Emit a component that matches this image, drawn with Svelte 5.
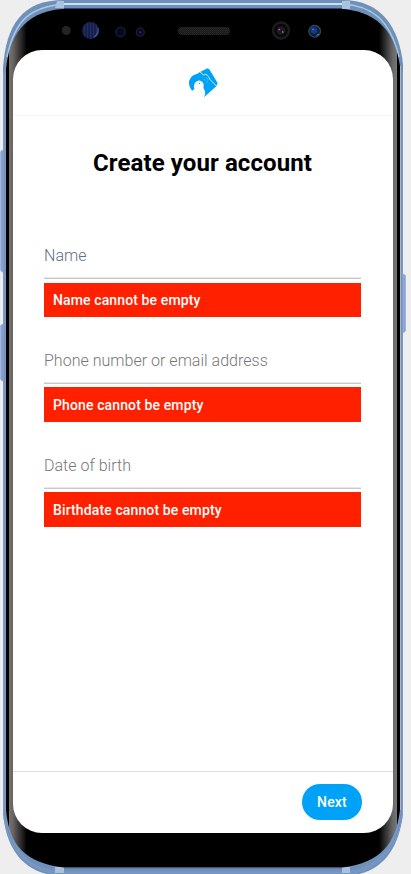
<script>
  const fields = [
    { label: 'Name', error: 'Name cannot be empty', tone: 'slate' },
    { label: 'Phone number or email address', error: 'Phone cannot be empty', tone: '' },
    { label: 'Date of birth', error: 'Birthdate cannot be empty', tone: '' }
  ];
</script>

<div class="device">
  <svg class="frame" width="411" height="874" viewBox="0 0 411 874" aria-hidden="true">
    <defs>
      <linearGradient id="edge" gradientUnits="userSpaceOnUse" x1="0" y1="0" x2="400" y2="0">
        <stop offset="0" stop-color="#000" />
        <stop offset=".0225" stop-color="#000" />
        <stop offset=".0226" stop-color="#777270" />
        <stop offset=".0325" stop-color="#676462" />
        <stop offset=".0675" stop-color="#000" />
        <stop offset=".9475" stop-color="#000" />
        <stop offset=".982" stop-color="#686868" />
        <stop offset=".9924" stop-color="#777" />
        <stop offset=".9925" stop-color="#000" />
      </linearGradient>
      <pattern id="mesh" width="2" height="2" patternUnits="userSpaceOnUse">
        <rect width="2" height="2" fill="#161616" />
        <rect width="1" height="1" fill="#2c2c2c" />
        <rect x="1" y="1" width="1" height="1" fill="#282828" />
      </pattern>
      <pattern id="lens" width="3" height="4" patternUnits="userSpaceOnUse">
        <rect width="3" height="4" fill="#17204e" />
        <rect width="1" height="4" fill="#222e63" />
      </pattern>
    </defs>
    <g fill="#859fce" stroke="#a4b6dd" stroke-width="1">
      <path d="M4 150.500H1.500L.5 152V270L2 272H4ZM4 324.500H1.500L.5 326V379L2 381H4Z" />
      <path d="M403 274.500H404.500L405.500 276V331L404 332.500H403Z" />
    </g>
    <path d="M3 813V68C6 25 22 0 64 0H342C382 0 399 28 403 64V813C399 850 381 876 342 876H64C25 876 6 850 3 813Z" fill="#6f90b9" />
    <path d="M5.500 72V809M5.500 809C10 850 27 870 62 872.500H345C380 869 396 847 400.500 811" fill="none" stroke="#7798c2" stroke-width="2" />
    <path d="M3.500 74V814C8 849 27 872 64 875M402.500 72V814C398 848 379 872 342 875" fill="none" stroke="#8099c8" />
    <path d="M7 57C15 19 31 7 64 4H344C371 6 390 19 399 57" fill="none" stroke="#a9c8e6" stroke-width="1.500" />
    <path d="M64 4H344" stroke="#d3ecf7" stroke-width="1.500" />
    <path d="M57 1H64V8H55ZM342 1H350V9H342ZM55 867H64V873H55ZM342 867H350V873H342Z" fill="#a9c3dd" />
    <path d="M64 8.500H342" stroke="#34466d" />
    <path d="M6 810V69C9 38 23 12 62 9H344C380 13 395 34 400 66V810C396 842 382 863 342 867.500H64C25 863 9 845 6 810Z" fill="url(#edge)" />
    <path d="M400.500 66V810" stroke="#a9b6cc" />
    <path d="M64 868H342" stroke="#536b91" />
    <circle cx="66.300" cy="30.500" r="4.500" fill="#242326" />
    <circle cx="90.500" cy="30.500" r="8.500" fill="url(#lens)" />
    <path d="M98 28Q99 34 94 37" fill="none" stroke="#415796" stroke-width="1.200" />
    <circle cx="120.500" cy="32" r="4.700" fill="#07091d" stroke="#191c42" stroke-width="1.300" />
    <circle cx="140.300" cy="32.200" r="4" fill="#07091d" stroke="#1b1d41" stroke-width="1.300" />
    <circle cx="140.300" cy="32.200" r="1.300" fill="#292749" />
    <rect x="178" y="27" width="52" height="8" rx="4" fill="url(#mesh)" />
    <circle cx="281" cy="30.500" r="8" fill="#08080a" stroke="#1d1d1f" stroke-width="2.300" />
    <circle cx="281" cy="30.500" r="4.300" fill="#211924" />
    <path d="M278.500 29.500H280M282 32H283.500" stroke="#887987" stroke-width="1.300" />
    <circle cx="314.700" cy="31.300" r="5.800" fill="#0b1d45" stroke="#3a4356" stroke-width="1.300" />
    <circle cx="314" cy="30.500" r="3.300" fill="#133c87" />
    <circle cx="313" cy="29.500" r=".8" fill="#5289d1" />
    <path d="M316.500 35.500L319 34" stroke="#7c8796" />
  </svg>

  <main class="screen">
    <header>
      <svg width="30" height="30" viewBox="0 0 30 30" aria-label="Logo">
        <path d="M4.200 22.800Q.5 18.500 1 13.500Q2.500 8.500 6.500 6.800Q9.500 6 12 4L19.500 .3L21.500 1.500L29.600 15L28.300 18.200L16 29.200Q18 25.500 16.700 22.500Q14.600 19.500 15.700 17.500Q15.500 13 11 12.500Q7 13 6.200 17Q5.200 18.500 6.500 21Z" fill="#00a2f7" />
        <path d="M12 4L15.500 7L18 6.200L20.500 8.500L22 11.500L25 14.500L28 17.800" fill="none" stroke="#d8f2ff" stroke-width=".9" />
        <path d="M16 11L17 12.500M18.500 9.500L20 11.500M18.500 14L20 13" fill="none" stroke="#8bd6fb" stroke-width=".7" />
        <circle cx="11.500" cy="15.500" r=".6" fill="#1b86bf" />
      </svg>
    </header>
    <form onsubmit={(e) => e.preventDefault()}>
      <h1>Create your account</h1>
      {#each fields as field}
        <div class="field">
          <div class="label {field.tone}">{field.label}</div>
          <p class="error">{field.error}</p>
        </div>
      {/each}
    </form>
    <footer><button type="button">Next</button></footer>
  </main>
</div>

<style>
  :global(body) { margin: 0; background: #eee; overflow: hidden; }
  .device {
    position: relative;
    box-sizing: border-box;
    width: 411px;
    height: 874px;
    padding: 50px 18px 41px 13px;
    font-family: Roboto, sans-serif;
    overflow: hidden;
  }
  .frame { position: absolute; left: 0; top: 0; }
  .screen {
    position: relative;
    display: flex;
    flex-direction: column;
    height: 783px;
    background: #fff;
    border-radius: 29px;
    overflow: hidden;
  }
  header {
    box-sizing: border-box;
    height: 66px;
    padding: 18px 0 0 175px;
    border-bottom: 1px solid #f4f4f4;
  }
  header svg { display: block; }
  form { flex: 1; padding: 31px 32px 0 31px; }
  h1 {
    margin: 0 0 71px;
    font-size: 24px;
    line-height: 32px;
    font-weight: 700;
    text-align: center;
    letter-spacing: 0.1px;
    white-space: nowrap;
    color: #000;
  }
  .field { height: 105px; }
  .label {
    box-sizing: border-box;
    height: 29px;
    border-bottom: 1px solid #c8c8c8;
    box-shadow: inset 0 -1px #e8e8e8;
    font-size: 16px;
    line-height: 12px;
    font-weight: 300;
    letter-spacing: 0.02px;
    color: #777;
  }
  .slate { color: #607080; }
  .error {
    box-sizing: border-box;
    height: 35px;
    margin: 3px 0 0;
    padding-left: 9px;
    background: #ff2000;
    color: #fff;
    font-size: 14px;
    line-height: 36px;
    font-weight: 500;
    letter-spacing: 0.12px;
  }
  .field:first-of-type .error { height: 34px; margin-top: 4px; line-height: 34px; }
  footer {
    box-sizing: border-box;
    height: 62px;
    border-top: 1px solid #ddd;
    padding: 12px 31px 0 0;
    display: flex;
    justify-content: flex-end;
  }
  button {
    width: 60px;
    height: 36px;
    padding: 0;
    border: 0;
    border-radius: 18px;
    background: #00a2f7;
    color: #fff;
    font: 500 14px/36px Roboto, sans-serif;
    letter-spacing: 0.2px;
  }
</style>
